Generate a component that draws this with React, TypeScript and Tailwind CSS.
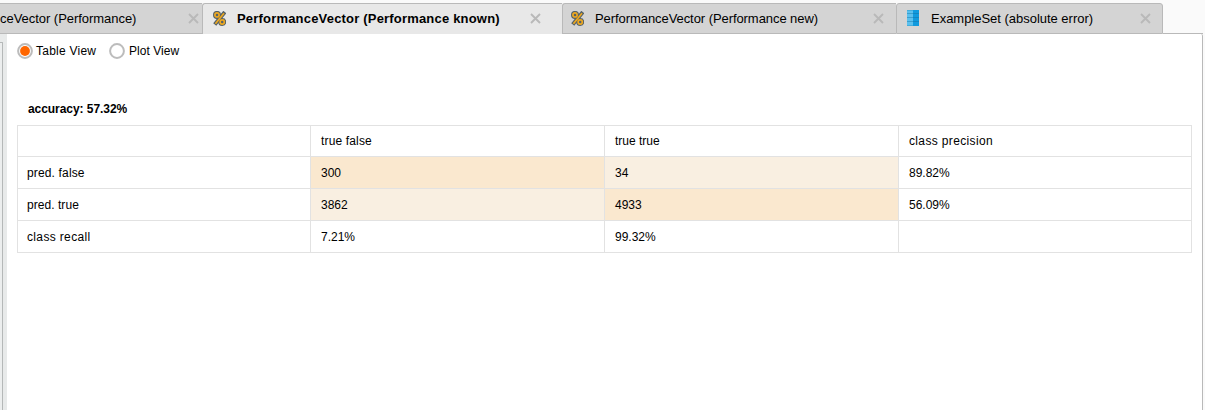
import React from "react";

function PercentIcon() {
  return (
    <svg width="13" height="15" viewBox="0 0 13 15" className="shrink-0">
      <g fill="none" stroke="#566268" strokeWidth="4">
        <circle cx="4" cy="3.9" r="2" />
        <circle cx="9.2" cy="11" r="2" />
        <path d="M10.6 2.6 3 12" strokeLinecap="square" />
      </g>
      <g fill="none" stroke="#eda820" strokeWidth="1.7">
        <circle cx="4" cy="3.9" r="2.1" />
        <circle cx="9.2" cy="11" r="2.1" />
        <path d="M11 2.2 2.4 12.8" />
      </g>
    </svg>
  );
}

function DataIcon() {
  return (
    <svg width="12" height="16" viewBox="0 0 12 16" shapeRendering="crispEdges" className="-mt-px shrink-0">
      <rect width="6" height="16" fill="#5bc0ee" />
      <rect x="6" width="6" height="16" fill="#109ade" />
      <path d="M0 3.5h6M0 7.5h6M0 11.5h6" stroke="#3b9fcd" />
      <path d="M6 3.5h6M6 7.5h6M6 11.5h6" stroke="#1286c2" />
      <path d="M0 .5h6M0 15.5h6" stroke="#44addb" />
    </svg>
  );
}

function CloseIcon() {
  return (
    <svg width="11" height="11" viewBox="0 0 11 11" className="shrink-0">
      <path d="M1 1l9 9M10 1l-9 9" stroke="#b9b9b9" strokeWidth="1.9" />
    </svg>
  );
}

type TabProps = {
  label: string;
  box: string;
  text: string;
  icon?: React.ReactNode;
  active?: boolean;
};

function Tab({ label, box, text, icon, active }: TabProps) {
  return (
    <div
      className={`flex h-[31px] shrink-0 items-center border-t border-[#b9b9b9] ${
        active ? "bg-[#e8e8e8] pb-px" : "border-b bg-[#d4d4d4]"
      } ${box}`}
    >
      {icon}
      <span className={`whitespace-nowrap text-[13px] leading-[18px] ${text}`}>{label}</span>
      <span className="ml-auto flex">
        <CloseIcon />
      </span>
    </div>
  );
}

function Radio({ label, checked, text }: { label: string; checked?: boolean; text: string }) {
  return (
    <div className="flex items-center">
      <svg width="16" height="16" viewBox="0 0 16 16">
        <circle cx="8" cy="8" r="6.9" fill="#fff" stroke="#bcbcbc" strokeWidth="2" />
        {checked && <circle cx="8" cy="8" r="4.9" fill="#ff6600" />}
      </svg>
      <span className={`ml-[3px] whitespace-nowrap text-[12px] leading-4 ${text}`}>{label}</span>
    </div>
  );
}

const rows = [
  ["", "true false", "true true", "class precision"],
  ["pred. false", "300", "34", "89.82%"],
  ["pred. true", "3862", "4933", "56.09%"],
  ["class recall", "7.21%", "99.32%", ""],
];

function shade(r: number, c: number) {
  if (r < 1 || r > 2 || c < 1 || c > 2) return "bg-white";
  return r === c ? "bg-[#fae8cf]" : "bg-[#f9efe1]";
}

function tracking(cell: string) {
  if (cell.startsWith("class")) return "tracking-[0.35px]";
  if (cell.includes("false")) return "tracking-[0.15px]";
  if (cell.startsWith("pred")) return "tracking-[0.05px]";
  return "";
}

export default function App() {
  return (
    <div className="flex h-[410px] w-[1205px] flex-col overflow-hidden bg-[#fafafa] pt-[3px] font-['Liberation_Sans',Arial,sans-serif] text-black">
      <div className="flex h-[31px] w-[1203px] shrink-0">
        <Tab label="ceVector (Performance)" box="w-[202px] pr-[3px]" text="tracking-[-0.04px]" />
        <Tab
          label="PerformanceVector (Performance known)"
          box="w-[360px] rounded-tl-[3px] border-l pl-[10px] pr-[21px]"
          text="ml-[11px] font-bold tracking-[0.19px]"
          icon={<PercentIcon />}
          active
        />
        <Tab
          label="PerformanceVector (Performance new)"
          box="w-[334px] rounded-tl-[3px] border-l pl-[8px] pr-[12px]"
          text="ml-[11px] tracking-[-0.07px]"
          icon={<PercentIcon />}
        />
        <Tab
          label="ExampleSet (absolute error)"
          box="w-[267px] rounded-t-[3px] border-x pl-[10px] pr-[11px]"
          text="ml-[12px] tracking-[-0.02px]"
          icon={<DataIcon />}
        />
        <div className="flex-1 border-b border-[#b9b9b9]" />
      </div>
      <div className="flex min-h-0 flex-1">
        <div className="flex w-[7px] shrink-0 bg-[#e8eaea] pt-[8px]">
          <div className="w-[3px] rounded-tr-[1px] border-r border-t border-[#b5b8b8] bg-[#eceeee]" />
        </div>
        <main className="w-[1196px] shrink-0 rounded-tr-[2px] border-r border-[#b9b9b9] bg-white pl-[10px] pt-[9px]">
          <div className="flex h-4">
            <Radio label="Table View" text="w-[61px] tracking-[0.24px]" checked />
            <div className="w-[12px]" />
            <Radio label="Plot View" text="ml-[4px] tracking-[0.05px]" />
          </div>
          <h1 className="mt-[41px] pl-[11px] text-[12px] font-bold leading-[18px] tracking-[-0.06px]">
            accuracy: 57.32%
          </h1>
          <div className="mt-[7px] grid w-[1175px] grid-cols-[293px_294px_294px_293px] grid-rows-[31px_32px_32px_32px] border-l border-t border-[#e2e2e2]">
            {rows.map((row, r) =>
              row.map((cell, c) => (
                <div
                  key={`${r}-${c}`}
                  className={`flex items-center border-b border-r border-[#e2e2e2] text-[12px] leading-4 ${
                    c === 0 ? "pl-[9px]" : "pl-[10px]"
                  } ${shade(r, c)} ${tracking(cell)}`}
                >
                  {cell}
                </div>
              )),
            )}
          </div>
        </main>
      </div>
    </div>
  );
}
